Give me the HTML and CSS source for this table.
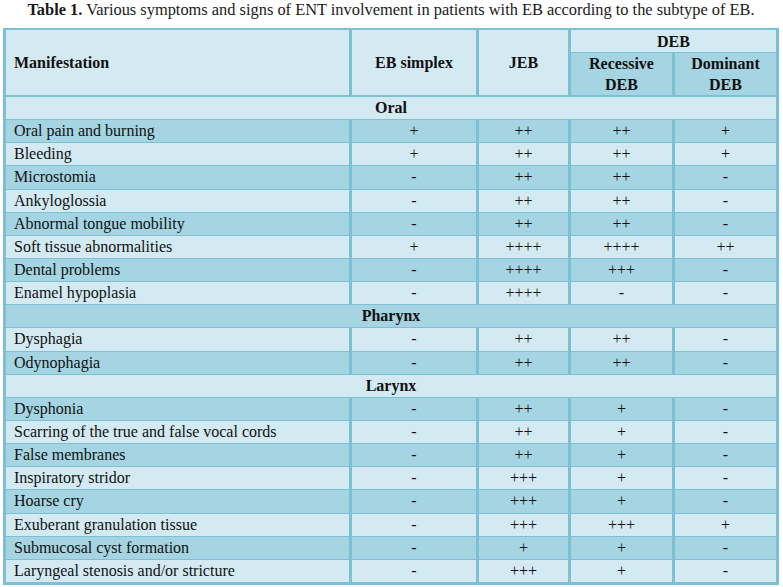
FILE: index.html
```html
<!DOCTYPE html>
<html>
<head>
<meta charset="utf-8">
<link rel="stylesheet" href="styles.css">
</head>
<body>
<div class="page">
  <p class="caption"><b>Table 1.</b> Various symptoms and signs of ENT involvement in patients with EB according to the subtype of EB.</p>
  <table class="ent">
    <colgroup>
      <col class="c1"><col class="c2"><col class="c3"><col class="c4"><col class="c5">
    </colgroup>
    <thead>
      <tr class="h1">
        <th rowspan="2" class="left">Manifestation</th>
        <th rowspan="2">EB simplex</th>
        <th rowspan="2">JEB</th>
        <th colspan="2">DEB</th>
      </tr>
      <tr class="h2">
        <th class="dark">Recessive<br>DEB</th>
        <th class="dark">Dominant<br>DEB</th>
      </tr>
    </thead>
    <tbody>
      <tr class="sec"><td colspan="5">Oral</td></tr>
      <tr><td>Oral pain and burning</td><td>+</td><td>++</td><td>++</td><td>+</td></tr>
      <tr><td>Bleeding</td><td>+</td><td>++</td><td>++</td><td>+</td></tr>
      <tr><td>Microstomia</td><td>-</td><td>++</td><td>++</td><td>-</td></tr>
      <tr><td>Ankyloglossia</td><td>-</td><td>++</td><td>++</td><td>-</td></tr>
      <tr><td>Abnormal tongue mobility</td><td>-</td><td>++</td><td>++</td><td>-</td></tr>
      <tr><td>Soft tissue abnormalities</td><td>+</td><td>++++</td><td>++++</td><td>++</td></tr>
      <tr><td>Dental problems</td><td>-</td><td>++++</td><td>+++</td><td>-</td></tr>
      <tr><td>Enamel hypoplasia</td><td>-</td><td>++++</td><td>-</td><td>-</td></tr>
      <tr class="sec"><td colspan="5">Pharynx</td></tr>
      <tr><td>Dysphagia</td><td>-</td><td>++</td><td>++</td><td>-</td></tr>
      <tr><td>Odynophagia</td><td>-</td><td>++</td><td>++</td><td>-</td></tr>
      <tr class="sec"><td colspan="5">Larynx</td></tr>
      <tr><td>Dysphonia</td><td>-</td><td>++</td><td>+</td><td>-</td></tr>
      <tr><td>Scarring of the true and false vocal cords</td><td>-</td><td>++</td><td>+</td><td>-</td></tr>
      <tr><td>False membranes</td><td>-</td><td>++</td><td>+</td><td>-</td></tr>
      <tr><td>Inspiratory stridor</td><td>-</td><td>+++</td><td>+</td><td>-</td></tr>
      <tr><td>Hoarse cry</td><td>-</td><td>+++</td><td>+</td><td>-</td></tr>
      <tr><td>Exuberant granulation tissue</td><td>-</td><td>+++</td><td>+++</td><td>+</td></tr>
      <tr><td>Submucosal cyst formation</td><td>-</td><td>+</td><td>+</td><td>-</td></tr>
      <tr><td>Laryngeal stenosis and/or stricture</td><td>-</td><td>+++</td><td>+</td><td>-</td></tr>
    </tbody>
  </table>
</div>
</body>
</html>
```
FILE: styles.css
```css
html, body {
  margin: 0;
  padding: 0;
  background: #ffffff;
}

.page {
  padding: 0 0 0 3px;
  font-family: "Liberation Serif", "Times New Roman", serif;
  color: #111111;
}

.caption {
  margin: 0;
  height: 28px;
  line-height: 20px;
  font-size: 16.4px;
  text-align: center;
  width: 776px;
  color: #1a1a1a;
}

.ent {
  border-collapse: collapse;
  table-layout: fixed;
  width: 776px;
  font-family: "Liberation Serif", "Times New Roman", serif;
  font-size: 16px;
  border-top: 2px solid #7bc0d3;
  border-left: 3px solid #7bc0d3;
  border-right: 3px solid #7bc0d3;
  border-bottom: 3px solid #7bc0d3;
}

.c1 { width: 346px; }
.c2 { width: 127px; }
.c3 { width: 92px; }
.c4 { width: 104px; }
.c5 { width: 104px; }

.ent th,
.ent td {
  border-left: 3px solid #7bc0d3;
  border-right: 3px solid #7bc0d3;
  border-top: 1px solid #7bc0d3;
  border-bottom: 1px solid #7bc0d3;
  padding: 0;
  text-align: center;
  vertical-align: middle;
  font-family: "Liberation Serif", "Times New Roman", serif;
}

.ent th {
  font-weight: bold;
  background: #d3eaf2;
  line-height: 21px;
  color: #111111;
}

.ent th.left { text-align: left; padding-left: 8px; }
.ent th.dark { background: #a5d4e2; }

.ent .h1 th { height: 22px; }
.ent .h2 th { height: 42px; }
.ent thead tr.h2 th { border-bottom: 2px solid #7bc0d3; }
.ent thead th[rowspan] { border-bottom: 2px solid #7bc0d3; }

.ent tbody td {
  height: 22.15px;
  line-height: 22px;
}

.ent tbody td:first-child {
  text-align: left;
  padding-left: 8px;
}

.ent tbody tr:nth-child(odd) td { background: #d3eaf2; }
.ent tbody tr:nth-child(even) td { background: #a5d4e2; }

.ent tbody tr.sec td {
  text-align: center;
  font-weight: bold;
  padding-left: 0;
}
```
